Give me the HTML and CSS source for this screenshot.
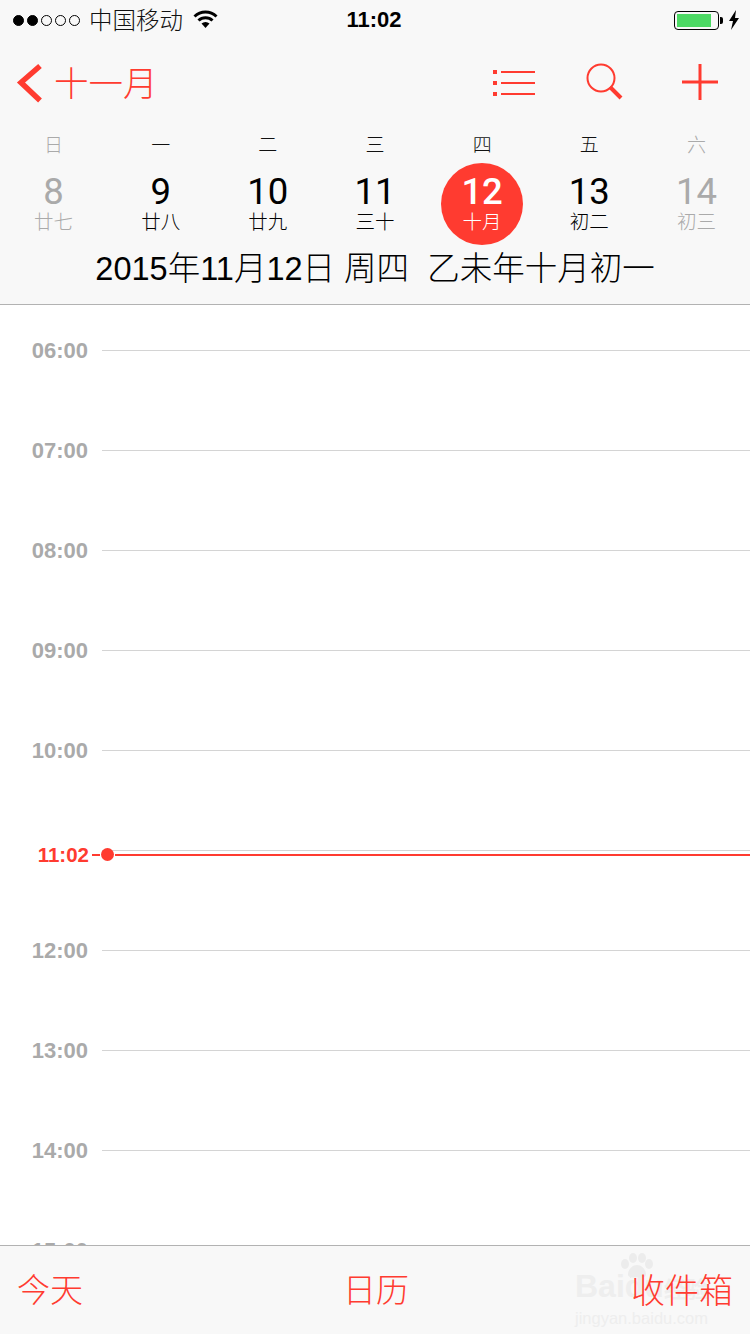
FILE: index.html
```html
<!DOCTYPE html>
<html lang="zh-CN">
<head>
    <meta charset="UTF-8">
    <meta name="viewport" content="width=device-width, initial-scale=1.0">
    <title>日历</title>
    <link rel="stylesheet" href="styles.css">
</head>
<body>
    <div class="phone">
        <header class="top">
            <div class="status">
                <div class="status-left">
                    <span class="signal">
                        <i class="dot on"></i><i class="dot on"></i><i class="dot"></i><i class="dot"></i><i class="dot"></i>
                    </span>
                    <span class="carrier">中国移动</span>
                    <svg class="wifi" width="25" height="18" viewBox="0 0 25 18">
                        <path d="M1.5 6.500a16 16 0 0 1 22 0" fill="none" stroke="#000" stroke-width="3"/>
                        <path d="M5.500 10.500a10 10 0 0 1 14 0" fill="none" stroke="#000" stroke-width="3"/>
                        <path d="M8.500 13.500a6 6 0 0 1 8 0L12.500 18z" fill="#000"/>
                    </svg>
                </div>
                <div class="clock">11:02</div>
                <div class="status-right">
                    <span class="battery"><span class="battery-fill"></span></span>
                    <span class="battery-nub"></span>
                    <svg class="bolt" width="12" height="20" viewBox="0 0 12 20">
                        <path d="M8 0L1 11h4L3 20l8-12H7z" fill="#000"/>
                    </svg>
                </div>
            </div>

            <nav class="nav">
                <a class="back">
                    <svg width="28" height="42" viewBox="0 0 28 42">
                        <path d="M24 3L5 19.500l19 18" fill="none" stroke="#ff3b30" stroke-width="5.500"/>
                    </svg>
                    <span>十一月</span>
                </a>
                <div class="nav-icons">
                    <svg class="icon-list" width="44" height="28" viewBox="0 0 44 28">
                        <path d="M0 0h4v4H0zM0 11h4v4H0zM0 22h4v4H0z" fill="#ff3b30"/>
                        <path d="M8 2h34M8 13h34M8 24h34" stroke="#ff3b30" stroke-width="2"/>
                    </svg>
                    <svg width="38" height="38" viewBox="0 0 38 38">
                        <circle cx="15" cy="15" r="13.500" fill="none" stroke="#ff3b30" stroke-width="2"/>
                        <path d="M24 24l11 11" stroke="#ff3b30" stroke-width="4"/>
                    </svg>
                    <svg class="icon-plus" width="36" height="36" viewBox="0 0 36 36">
                        <path d="M18 0v36M0 18h36" stroke="#ff3b30" stroke-width="3"/>
                    </svg>
                </div>
            </nav>

            <div class="week">
                <div class="wd muted">日</div>
                <div class="wd">一</div>
                <div class="wd">二</div>
                <div class="wd">三</div>
                <div class="wd">四</div>
                <div class="wd">五</div>
                <div class="wd muted">六</div>
            </div>
            <div class="week days">
                <div class="day muted"><b>8</b><span>廿七</span></div>
                <div class="day"><b>9</b><span>廿八</span></div>
                <div class="day"><b>10</b><span>廿九</span></div>
                <div class="day"><b>11</b><span>三十</span></div>
                <div class="day today"><b>12</b><span>十月</span></div>
                <div class="day"><b>13</b><span>初二</span></div>
                <div class="day muted"><b>14</b><span>初三</span></div>
            </div>
            <div class="full-date">2015年11月12日 周四&nbsp;&nbsp;乙未年十月初一</div>
        </header>

        <main class="timeline">
            <div class="hour"><span>06:00</span><i></i></div>
            <div class="hour"><span>07:00</span><i></i></div>
            <div class="hour"><span>08:00</span><i></i></div>
            <div class="hour"><span>09:00</span><i></i></div>
            <div class="hour"><span>10:00</span><i></i></div>
            <div class="hour"><span></span><i></i></div>
            <div class="hour"><span>12:00</span><i></i></div>
            <div class="hour"><span>13:00</span><i></i></div>
            <div class="hour"><span>14:00</span><i></i></div>
            <div class="hour"><span>15:00</span></div>
            <div class="now">
                <span class="now-time">11:02</span>
                <i class="now-tick"></i>
                <i class="now-dot"></i>
                <i class="now-line"></i>
            </div>
        </main>

        <footer class="tabs">
            <a>今天</a>
            <a class="tab-mid">日历</a>
            <a class="tab-right">收件箱</a>
            <div class="watermark">
                <svg class="paw" width="34" height="26" viewBox="0 0 34 26">
                    <ellipse cx="5" cy="11" rx="4" ry="5"/>
                    <ellipse cx="13" cy="5" rx="4" ry="5"/>
                    <ellipse cx="22" cy="5" rx="4" ry="5"/>
                    <ellipse cx="29" cy="11" rx="4" ry="5"/>
                    <path d="M17 12c-5 0-9 5-9 9 0 4 5 4 9 3 4 1 9 1 9-3 0-4-4-9-9-9z"/>
                </svg>
                <div class="wm-big">Baidu<span class="wm-cn">经验</span></div>
                <div class="wm-small">jingyan.baidu.com</div>
            </div>
        </footer>
    </div>
</body>
</html>
```

FILE: styles.css
```css
* {
    box-sizing: border-box;
}

body {
    margin: 0;
    background: #fff;
    font-family: "Liberation Sans", "Noto Sans CJK SC", sans-serif;
}

.phone {
    width: 750px;
    height: 1334px;
    display: flex;
    flex-direction: column;
    overflow: hidden;
}

/* top bar */
.top {
    height: 305px;
    flex: none;
    background: #f8f8f8;
    border-bottom: 1px solid #b2b2b2;
}

.status {
    height: 40px;
    padding: 0 10px 0 13px;
    display: grid;
    grid-template-columns: 1fr auto 1fr;
    align-items: center;
}

.status-left,
.status-right {
    display: flex;
    align-items: center;
}

.status-right {
    justify-content: flex-end;
}

.signal {
    display: flex;
    gap: 3px;
}

.dot {
    width: 11px;
    height: 11px;
    border: 1px solid #000;
    border-radius: 50%;
}

.dot.on {
    background: #000;
}

.carrier {
    margin-left: 9px;
    margin-top: -2px;
    font-size: 23.500px;
    font-weight: 300;
    color: #111;
}

.wifi {
    margin-left: 10px;
    margin-top: -2px;
}

.clock {
    font-size: 22px;
    font-weight: bold;
    color: #000;
    margin-right: 5px;
}

.battery {
    width: 45px;
    height: 19px;
    padding: 2px;
    border: 1px solid #000;
    border-radius: 4px;
}

.battery-fill {
    display: block;
    width: 34px;
    height: 100%;
    background: #4cd964;
}

.battery-nub {
    width: 3px;
    height: 7px;
    margin-left: 1px;
    background: #000;
    border-radius: 0 2px 2px 0;
}

.bolt {
    margin-left: 5px;
}

.nav {
    height: 88px;
    padding: 0 32px 0 16px;
    display: flex;
    align-items: center;
    justify-content: space-between;
}

.back {
    display: flex;
    align-items: center;
    gap: 10px;
    color: #ff3b30;
    font-size: 34.500px;
    font-weight: 300;
}

.back span {
    margin-top: -6px;
}

.nav-icons {
    align-self: flex-start;
    margin-top: 23px;
    display: flex;
    align-items: flex-start;
    gap: 49px;
}

.icon-list {
    margin-top: 7px;
}

.icon-plus {
    margin-top: 1px;
    margin-left: 9px;
}

.week {
    display: grid;
    grid-template-columns: repeat(7, 1fr);
    justify-items: center;
}

.wd {
    height: 35px;
    line-height: 35px;
    font-size: 19px;
    font-weight: 300;
    color: #111;
}

.wd.muted {
    color: #aaa;
}

.day {
    width: 82px;
    height: 82px;
    display: flex;
    flex-direction: column;
    align-items: center;
    color: #000;
    border-radius: 50%;
}

.day b {
    margin-top: 10px;
    font-family: Roboto, "Liberation Sans", sans-serif;
    font-size: 36.500px;
    line-height: 38px;
    font-weight: 400;
}

.day span {
    margin-top: -1px;
    font-size: 19.500px;
    line-height: 24px;
    font-weight: 300;
}

.day.muted {
    color: #aaa;
}

.day.today {
    background: #ff3b30;
    color: #fff;
}

.day.today b {
    font-weight: 500;
}

.full-date {
    height: 47px;
    line-height: 48px;
    text-align: center;
    font-size: 32.500px;
    font-weight: 300;
    color: #000;
}

/* hours */
.timeline {
    position: relative;
    flex: 1;
    overflow: hidden;
}

.hour {
    height: 100px;
    padding-top: 45px;
    display: flex;
    align-items: flex-start;
}

.hour span {
    width: 88px;
    flex: none;
    text-align: right;
    font-size: 22px;
    line-height: 1;
    font-weight: bold;
    color: #aaa;
    margin-top: -10px;
}

.hour i {
    flex: 1;
    margin-left: 14px;
    height: 1px;
    background: #d4d4d4;
}

.now {
    position: absolute;
    top: 541px;
    left: 0;
    right: 0;
    height: 18px;
    display: flex;
    align-items: center;
}

.now-time {
    width: 89px;
    flex: none;
    text-align: right;
    color: #ff3b30;
    font-size: 20.500px;
    font-weight: bold;
}

.now-tick {
    width: 8px;
    height: 2px;
    margin-left: 3px;
    background: #ff3b30;
}

.now-dot {
    width: 13px;
    height: 13px;
    margin-left: 1px;
    margin-top: -1px;
    border-radius: 50%;
    background: #ff3b30;
}

.now-line {
    flex: 1;
    height: 2px;
    margin-left: 1px;
    background: #ff3b30;
}

/* bottom tabs */
.tabs {
    position: relative;
    height: 89px;
    flex: none;
    padding: 0 17px 4px;
    display: flex;
    align-items: center;
    justify-content: space-between;
    background: #f8f8f8;
    border-top: 1px solid #b2b2b2;
    color: #ff3b30;
    font-size: 33px;
    font-weight: 300;
}

.tabs a {
    position: relative;
    z-index: 1;
}

.tab-mid {
    margin-left: 38px;
}

.tab-right {
    font-size: 34px;
}

.watermark {
    position: absolute;
    left: 575px;
    top: 7px;
    width: 140px;
    color: #eeeeee;
    font-weight: bold;
}

.paw {
    position: absolute;
    left: 45px;
    top: 0;
    fill: #ececec;
}

.wm-big {
    margin-top: 18px;
    font-size: 32px;
    line-height: 30px;
    white-space: nowrap;
}

.wm-cn {
    font-size: 22px;
}

.wm-small {
    margin-top: 3px;
    font-size: 16.500px;
    line-height: 20px;
    font-weight: normal;
    white-space: nowrap;
}
```
